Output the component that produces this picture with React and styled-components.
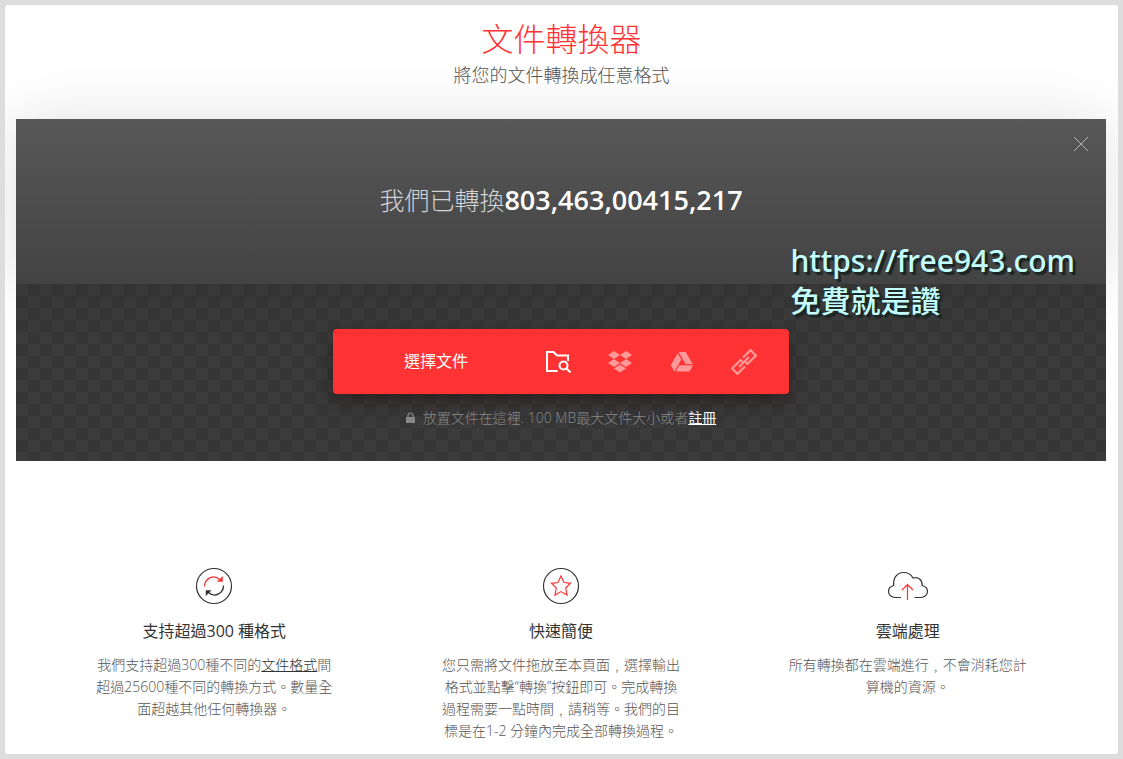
import React from "react";
import styled, { createGlobalStyle, css } from "styled-components";

const GlobalStyle = createGlobalStyle`
  * {
    box-sizing: border-box;
  }
  body {
    margin: 0;
    background: #dddddd;
    color: #333333;
    font-family: "Open Sans", "Noto Sans CJK TC", sans-serif;
    font-weight: 300;
  }
  button {
    font-family: inherit;
    border: none;
    background: none;
    padding: 0;
    cursor: pointer;
  }
`;

// page
const Frame = styled.div`
  min-height: 100vh;
  border: 5px solid #dddddd;
  border-radius: 8px;
  background: white;
  overflow: hidden;
  display: flex;
  flex-direction: column;
`;
const Header = styled.header`
  padding: 12px 16px 30px;
  text-align: center;
`;
const Title = styled.h1`
  margin: 0;
  color: #ff3333;
  font-size: 32px;
  font-weight: 300;
  line-height: 44px;
`;
const SubTitle = styled.p`
  margin: 0;
  color: #555555;
  font-size: 18px;
  line-height: 28px;
`;

// converter
const Converter = styled.section`
  position: relative;
  margin: 0 12px 0 11px;
`;
const CounterBlock = styled.div`
  position: relative;
  z-index: 1;
  display: flex;
  align-items: center;
  justify-content: center;
  height: 165px;
  padding-bottom: 4px;
  background: linear-gradient(#575757, #434343);
  box-shadow: 0 0 60px rgba(0, 0, 0, 0.12);
`;
const Counter = styled.p`
  margin: 0;
  color: #d4d4d4;
  font-size: 25px;
  line-height: 36px;
  strong {
    color: white;
    font-size: 27px;
    font-weight: 600;
  }
`;
const CloseButton = styled.button`
  position: absolute;
  top: 17px;
  right: 17px;
  width: 16px;
  height: 16px;
  svg {
    display: block;
  }
`;
const DropZone = styled.div`
  display: flex;
  flex-direction: column;
  align-items: center;
  height: 177px;
  padding-top: 45px;
  background: repeating-conic-gradient(#363636 0 25%, #3b3b3b 0 50%) 0 0 / 24px
    24px;
`;
const Picker = styled.div`
  display: flex;
  width: 456px;
  max-width: 100%;
  height: 65px;
  padding: 0 14px 0 12px;
  border-radius: 4px;
  background: #ff3333;
  box-shadow: 0 8px 18px rgba(32, 12, 12, 0.5);
`;
const PickButton = styled.button`
  flex: 1;
  padding-bottom: 4px;
  color: white;
  font-size: 16px;
  font-weight: 400;
`;
const SourceButton = styled.button`
  display: flex;
  align-items: center;
  justify-content: center;
  width: 62px;
  color: #ff9999;
  ${(props) =>
    props.$active &&
    css`
      color: white;
    `}
`;
const Hint = styled.p`
  display: flex;
  align-items: center;
  gap: 8px;
  margin: 14px 0 0;
  color: #888888;
  font-size: 14px;
  line-height: 20px;
  a {
    color: white;
    font-weight: 400;
  }
`;
const Watermark = styled.div`
  position: absolute;
  z-index: 2;
  top: 122px;
  right: 31px;
  color: #c3ffff;
  font-family: "Noto Sans", "Noto Sans CJK TC", sans-serif;
  font-size: 30px;
  font-weight: 500;
  line-height: 40px;
  text-shadow: 2px 2px 1px #1d2626, 3px 3px 1px #1d2626;
  pointer-events: none;
`;

// features
const Features = styled.section`
  display: grid;
  grid-template-columns: repeat(3, 1fr);
  padding: 106px 37px 12px 36px;
`;
const Feature = styled.article`
  display: flex;
  flex-direction: column;
  align-items: center;
  text-align: center;
`;
const FeatureTitle = styled.h2`
  margin: 15px 0 12px;
  color: #333333;
  font-size: 16px;
  font-weight: 400;
  line-height: 22px;
`;
const FeatureText = styled.p`
  margin: 0;
  width: 240px;
  color: #555555;
  font-size: 14px;
  line-height: 22px;
  a {
    color: #333333;
  }
`;

function CloseIcon() {
  return (
    <svg width="16" height="16" viewBox="0 0 16 16" stroke="#b5b5b5">
      <path d="M1 1l14 14M15 1L1 15" />
    </svg>
  );
}

function FolderIcon() {
  return (
    <svg width="26" height="24" viewBox="0 0 26 24" fill="none" stroke="currentColor" strokeWidth="2">
      <path d="M12.500 21H2V2h6.500l3.500 3.500h11V11" />
      <circle cx="18.500" cy="15.500" r="4" />
      <path d="M21.500 18.500l4 4" />
    </svg>
  );
}

function DropboxIcon() {
  return (
    <svg width="26" height="24" viewBox="0 0 26 24" fill="currentColor">
      <path d="M7 1l6 4-6 4-6-4zM19 1l6 4-6 4-6-4zM7 9l6 4-6 4-6-4zM19 9l6 4-6 4-6-4zM13 14.500l6 4-6 4-6-4z" />
    </svg>
  );
}

function DriveIcon() {
  return (
    <svg width="24" height="22" viewBox="0 0 24 22" fill="currentColor">
      <path d="M8.500 1h7.200l7 12h-7.200zM7.700 2.200l3.600 6.200L4.400 20.500.8 14.200zM9.300 14.200H23l-3.600 6.300H5.700z" />
    </svg>
  );
}

function LinkIcon() {
  return (
    <svg width="26" height="26" viewBox="0 0 26 26" fill="none" stroke="currentColor" strokeWidth="2.200">
      <g transform="rotate(-45 13 13)">
        <path d="M10.500 16.800H0V9.200h12V12M15.500 9.200H26v7.600H14V14" />
        <path d="M6 13h14" />
      </g>
    </svg>
  );
}

function LockIcon() {
  return (
    <svg width="9" height="12" viewBox="0 0 9 12">
      <path d="M2 5V3.500a2.500 2.500 0 0 1 5 0V5" fill="none" stroke="#888888" strokeWidth="1.200" />
      <path d="M0 5h9v6H0z" fill="#888888" />
    </svg>
  );
}

function RefreshIcon() {
  return (
    <svg width="38" height="38" viewBox="0 0 38 38" fill="none">
      <circle cx="19" cy="19" r="17.500" stroke="#333333" strokeWidth="1.200" />
      <path d="M9.500 19.500c0-8 9-13 15.500-6.500" stroke="#ff3333" strokeWidth="1.300" />
      <path d="M27.500 9.500V14.500h-5z" fill="#ff3333" stroke="#ff3333" strokeWidth=".5" />
      <path d="M28.500 18.500c0 8-9 13-15.500 6.500" stroke="#333333" strokeWidth="1.300" />
      <path d="M11 28.500V23.500h5z" fill="#333333" stroke="#333333" strokeWidth=".5" />
    </svg>
  );
}

function StarIcon() {
  return (
    <svg width="38" height="38" viewBox="0 0 38 38" fill="none">
      <circle cx="19" cy="19" r="17.500" stroke="#333333" strokeWidth="1.200" />
      <path
        d="M19 9l3 6.500 6.500.8-4.800 4.700 1.300 7-6-3.400-6 3.400 1.300-7-4.800-4.700 6.500-.8z"
        stroke="#ff3333"
        strokeWidth="1.200"
      />
    </svg>
  );
}

function CloudIcon() {
  return (
    <svg width="42" height="38" viewBox="0 0 42 38" fill="none" strokeWidth="1.200">
      <path
        d="M14 30.500H8.500C4.500 30.500 1.500 28 1.500 24.500c0-3 2-5.200 5.200-6C6 11 10 5.500 16.500 5.500c4.500 0 7.800 2.200 9.500 5.500 5-1.500 9.500 1.800 9.200 7.500 3.300.8 5.300 3 5.300 6 0 3.500-3 6-7 6H27.500"
        stroke="#333333"
      />
      <path d="M20.500 33V17.500M15 23l5.500-5.500L26 23" stroke="#ff3333" />
    </svg>
  );
}

function App() {
  return (
    <>
      <GlobalStyle />
      <Frame>
        <Header>
          <Title>文件轉換器</Title>
          <SubTitle>將您的文件轉換成任意格式</SubTitle>
        </Header>
        <Converter>
          <CounterBlock>
            <Counter>
              我們已轉換<strong>803,463,00415,217</strong>
            </Counter>
            <CloseButton type="button" aria-label="關閉">
              <CloseIcon />
            </CloseButton>
          </CounterBlock>
          <DropZone>
            <Picker>
              <PickButton type="button">選擇文件</PickButton>
              <SourceButton type="button" aria-label="電腦" $active>
                <FolderIcon />
              </SourceButton>
              <SourceButton type="button" aria-label="Dropbox">
                <DropboxIcon />
              </SourceButton>
              <SourceButton type="button" aria-label="Google Drive">
                <DriveIcon />
              </SourceButton>
              <SourceButton type="button" aria-label="網址">
                <LinkIcon />
              </SourceButton>
            </Picker>
            <Hint>
              <LockIcon />
              <span>
                放置文件在這裡. 100 MB最大文件大小或者<a href="#signup">註冊</a>
              </span>
            </Hint>
          </DropZone>
          <Watermark>
            https://free943.com
            <br />
            免費就是讚
          </Watermark>
        </Converter>
        <Features>
          <Feature>
            <RefreshIcon />
            <FeatureTitle>支持超過300 種格式</FeatureTitle>
            <FeatureText>
              我們支持超過300種不同的<a href="#formats">文件格式</a>間超過25600種不同的轉換方式。數量全面超越其他任何轉換器。
            </FeatureText>
          </Feature>
          <Feature>
            <StarIcon />
            <FeatureTitle>快速簡便</FeatureTitle>
            <FeatureText>
              您只需將文件拖放至本頁面﹐選擇輸出格式並點擊“轉換”按鈕即可。完成轉換過程需要一點時間﹐請稍等。我們的目標是在1-2 分鐘內完成全部轉換過程。
            </FeatureText>
          </Feature>
          <Feature>
            <CloudIcon />
            <FeatureTitle>雲端處理</FeatureTitle>
            <FeatureText>
              所有轉換都在雲端進行﹐不會消耗您計算機的資源。
            </FeatureText>
          </Feature>
        </Features>
      </Frame>
    </>
  );
}

export default App;
